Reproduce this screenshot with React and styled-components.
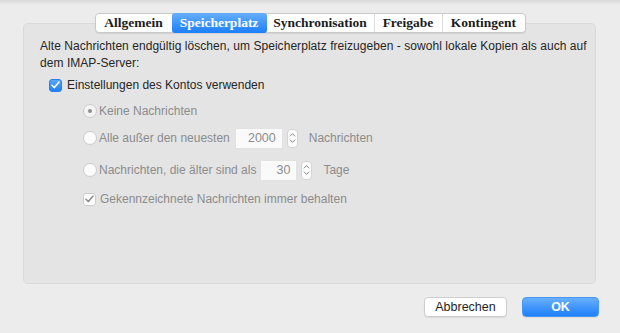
import styled, { createGlobalStyle } from 'styled-components';

const GlobalStyle = createGlobalStyle`
  html, body {
    margin: 0;
    padding: 0;
  }
  body {
    background: linear-gradient(#d9d9d9 0px, #ececec 5px, #ececec 100%);
    font-family: 'Liberation Sans', Arial, sans-serif;
    font-size: 12px;
    color: #262626;
  }
`;

const Window = styled.div`
  width: 620px;
  height: 333px;
  box-sizing: border-box;
  padding: 13px 24px 0 23px;
  display: flex;
  flex-direction: column;
`;

const TabBar = styled.div`
  align-self: center;
  display: flex;
  height: 20px;
  box-sizing: border-box;
  background: #fff;
  border: 1px solid #c9c9c9;
  border-radius: 4px;
  box-shadow: 0 1px 1px rgba(0, 0, 0, 0.08);
  position: relative;
  z-index: 1;
  margin-left: 1px;
`;

const Tab = styled.div`
  width: ${(p) => p.$w}px;
  display: flex;
  align-items: center;
  justify-content: center;
  font-family: 'Liberation Serif', 'Times New Roman', serif;
  font-weight: bold;
  font-size: 13.5px;
  color: ${(p) => (p.$active ? '#fff' : '#1b1b1b')};
  background: ${(p) =>
    p.$active ? 'linear-gradient(#65aefc, #1c7ffb)' : 'transparent'};
  border-left: ${(p) => (p.$first || p.$active || p.$afterActive ? 'none' : '1px solid #dcdcdc')};
  margin: ${(p) => (p.$active ? '-1px 0' : '0')};
  border-radius: ${(p) => (p.$active ? '3px' : '0')};
`;

const Panel = styled.div`
  margin-top: -10px;
  height: 261px;
  box-sizing: border-box;
  background: #e4e4e4;
  border: 1px solid #dadada;
  border-radius: 5px;
  padding: 14px 8px 0 16px;
`;

const Description = styled.p`
  margin: 0;
  line-height: 17px;
  color: #262626;
  letter-spacing: 0.05px;
`;

const Row = styled.div`
  display: flex;
  align-items: center;
  height: 22px;
  margin-top: ${(p) => p.$space || 0}px;
  margin-left: ${(p) => p.$indent || 0}px;
  color: ${(p) => (p.$disabled ? '#8c8c8c' : '#262626')};
`;

const CheckBox = styled.span`
  width: 13px;
  height: 13px;
  box-sizing: border-box;
  border-radius: 3px;
  margin-right: ${(p) => (p.$blue ? 5 : 4)}px;
  display: flex;
  align-items: center;
  justify-content: center;
  background: ${(p) => (p.$blue ? 'linear-gradient(#5aa6fb, #1f80f8)' : '#fdfdfd')};
  border: 1px solid ${(p) => (p.$blue ? '#2d7fe6' : '#cdcdcd')};
`;

const Radio = styled.span`
  width: 14px;
  height: 14px;
  box-sizing: border-box;
  border-radius: 50%;
  margin-right: 2px;
  display: flex;
  align-items: center;
  justify-content: center;
  background: ${(p) => (p.$on ? '#f4f4f4' : '#fbfbfb')};
  border: 1px solid #cbcbcb;

  &::after {
    content: '';
    display: ${(p) => (p.$on ? 'block' : 'none')};
    width: 4px;
    height: 4px;
    border-radius: 50%;
    background: #8e8e8e;
  }
`;

const Field = styled.span`
  width: ${(p) => p.$w}px;
  height: 21px;
  box-sizing: border-box;
  background: #fafafa;
  border: 1px solid #e2e2e2;
  display: flex;
  align-items: center;
  justify-content: flex-end;
  padding-right: 6px;
  margin-left: ${(p) => p.$ml}px;
  color: #8c8c8c;
  font-size: 12.5px;
`;

const Stepper = styled.span`
  width: 11px;
  height: 19px;
  box-sizing: border-box;
  margin-left: 4px;
  margin-right: 11px;
  background: #fbfbfb;
  border: 1px solid #d4d4d4;
  border-radius: 4px;
  display: flex;
  align-items: center;
  justify-content: center;
`;

const Footer = styled.div`
  display: flex;
  justify-content: flex-end;
  gap: 15px;
  margin-top: 13px;
  margin-right: -3px;
`;

const Button = styled.button`
  width: ${(p) => p.$w}px;
  height: 20px;
  box-sizing: border-box;
  border-radius: 4px;
  font-family: 'Liberation Sans', Arial, sans-serif;
  font-size: 12.5px;
  padding: 0;
  color: ${(p) => (p.$primary ? '#fff' : '#1e1e1e')};
  font-weight: ${(p) => (p.$primary ? 'bold' : 'normal')};
  background: ${(p) => (p.$primary ? 'linear-gradient(#68b0fd, #1d7ff9)' : '#fff')};
  border: 1px solid ${(p) => (p.$primary ? '#4a97f3' : '#cecece')};
  box-shadow: 0 1px 1px rgba(0, 0, 0, 0.08);
`;

const Check = ({ color }) => (
  <svg width="9" height="8" viewBox="0 0 9 8">
    <path d="M1 4.3 L3.4 6.6 L8 1" fill="none" stroke={color} strokeWidth="1.5" strokeLinecap="round" strokeLinejoin="round" />
  </svg>
);

const Arrows = () => (
  <svg width="7" height="14" viewBox="0 0 7 14">
    <path d="M1.2 5 L3.5 2.6 L5.8 5 M1.2 9 L3.5 11.4 L5.8 9" fill="none" stroke="#8a8a8a" strokeWidth="1" strokeLinecap="round" strokeLinejoin="round" />
  </svg>
);

const tabs = [
  ['Allgemein', 76],
  ['Speicherplatz', 95],
  ['Synchronisation', 107],
  ['Freigabe', 67],
  ['Kontingent', 82],
];

export default function App() {
  return (
    <>
      <GlobalStyle />
      <Window>
        <TabBar>
          {tabs.map(([label, w], i) => (
            <Tab key={label} $w={w} $first={i === 0} $active={i === 1} $afterActive={i === 2}>
              {label}
            </Tab>
          ))}
        </TabBar>
        <Panel>
          <Description>
            Alte Nachrichten endgültig löschen, um Speicherplatz freizugeben - sowohl lokale Kopien als auch auf
            dem IMAP-Server:
          </Description>
          <Row $space={2} $indent={9}>
            <CheckBox $blue>
              <Check color="#fff" />
            </CheckBox>
            Einstellungen des Kontos verwenden
          </Row>
          <Row $space={4} $indent={43} $disabled>
            <Radio $on />
            Keine Nachrichten
          </Row>
          <Row $space={5} $indent={43} $disabled>
            <Radio />
            Alle außer den neuesten
            <Field $w={48} $ml={5}>2000</Field>
            <Stepper>
              <Arrows />
            </Stepper>
            Nachrichten
          </Row>
          <Row $space={10} $indent={43} $disabled>
            <Radio />
            Nachrichten, die älter sind als
            <Field $w={37} $ml={4}>30</Field>
            <Stepper>
              <Arrows />
            </Stepper>
            Tage
          </Row>
          <Row $space={7} $indent={43} $disabled>
            <CheckBox>
              <Check color="#8e8e8e" />
            </CheckBox>
            Gekennzeichnete Nachrichten immer behalten
          </Row>
        </Panel>
        <Footer>
          <Button $w={83}>Abbrechen</Button>
          <Button $w={77} $primary>OK</Button>
        </Footer>
      </Window>
    </>
  );
}
